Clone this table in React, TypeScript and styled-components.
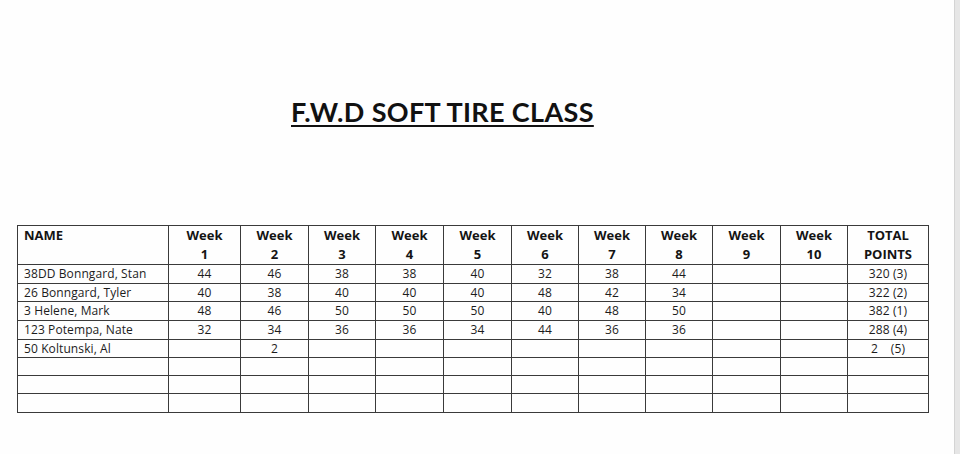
import React from "react";
import styled, { createGlobalStyle } from "styled-components";

const Global = createGlobalStyle`
  html, body { margin: 0; padding: 0; background: #ffffff; }
  body { font-family: "Open Sans", "Liberation Sans", sans-serif; color: #161616; }
`;

const Page = styled.div`
  position: relative;
  width: 960px;
  height: 454px;
  overflow: hidden;
  background: #fefefe;
  display: flex;
  flex-direction: column;
  padding: 95px 0 0 17px;
  box-sizing: border-box;
`;

const Edge = styled.div`
  position: absolute;
  top: 0;
  right: 0;
  width: 5px;
  height: 100%;
  background: #e6e6e6;
  border-left: 1px solid #d4d4d4;
`;

const Title = styled.h1`
  margin: 0 0 0 274px;
  font-family: "Lato", "Open Sans", sans-serif;
  font-weight: 700;
  font-size: 27px;
  letter-spacing: 0.35px;
  line-height: 33px;
  text-decoration: underline;
  text-decoration-thickness: 2px;
  text-underline-offset: 3px;
  color: #111;
  white-space: nowrap;
`;

const Table = styled.table`
  margin-top: 97px;
  border-collapse: collapse;
  table-layout: fixed;
  width: 912px;
  border: 1px solid #3a3a3a;
`;

const HeadCell = styled.th<{ $left?: boolean }>`
  border: 1px solid #3a3a3a;
  height: 37px;
  padding: 0 0 0 ${(p) => (p.$left ? "6px" : "0")};
  text-align: ${(p) => (p.$left ? "left" : "center")};
  vertical-align: top;
  font-size: 13px;
  font-weight: 700;
  line-height: 19px;
  color: #141414;
  box-sizing: border-box;
`;

const Cell = styled.td<{ $left?: boolean; $h: number }>`
  border: 1px solid #3a3a3a;
  height: ${(p) => p.$h}px;
  padding: 0 0 0 ${(p) => (p.$left ? "6px" : "0")};
  text-align: ${(p) => (p.$left ? "left" : "center")};
  vertical-align: middle;
  font-size: 12px;
  letter-spacing: 0.1px;
  line-height: 14px;
  color: #1c1c1c;
  white-space: pre;
  box-sizing: border-box;
`;

const widths = [151, 72, 68, 67, 68, 68, 67, 67, 67, 68, 67, 81];

const rows: { name: string; weeks: string[]; total: string }[] = [
  { name: "38DD Bonngard, Stan", weeks: ["44", "46", "38", "38", "40", "32", "38", "44", "", ""], total: "320 (3)" },
  { name: "26 Bonngard, Tyler", weeks: ["40", "38", "40", "40", "40", "48", "42", "34", "", ""], total: "322 (2)" },
  { name: "3 Helene, Mark", weeks: ["48", "46", "50", "50", "50", "40", "48", "50", "", ""], total: "382 (1)" },
  { name: "123 Potempa, Nate", weeks: ["32", "34", "36", "36", "34", "44", "36", "36", "", ""], total: "288 (4)" },
  { name: "50 Koltunski, Al", weeks: ["", "2", "", "", "", "", "", "", "", ""], total: "2    (5)" },
  { name: "", weeks: Array(10).fill(""), total: "" },
  { name: "", weeks: Array(10).fill(""), total: "" },
  { name: "", weeks: Array(10).fill(""), total: "" },
];

const heights = [19, 18, 19, 19, 18, 18, 18, 19];

export default function App() {
  return (
    <Page>
      <Global />
      <Title>F.W.D SOFT TIRE CLASS</Title>
      <Table>
        <colgroup>
          {widths.map((w, i) => (
            <col key={i} style={{ width: w }} />
          ))}
        </colgroup>
        <thead>
          <tr>
            <HeadCell $left>NAME</HeadCell>
            {Array.from({ length: 10 }, (_, i) => (
              <HeadCell key={i}>
                Week
                <br />
                {i + 1}
              </HeadCell>
            ))}
            <HeadCell>
              TOTAL
              <br />
              POINTS
            </HeadCell>
          </tr>
        </thead>
        <tbody>
          {rows.map((r, ri) => (
            <tr key={ri}>
              <Cell $left $h={heights[ri]}>{r.name}</Cell>
              {r.weeks.map((w, wi) => (
                <Cell key={wi} $h={heights[ri]}>{w}</Cell>
              ))}
              <Cell $h={heights[ri]}>{r.total}</Cell>
            </tr>
          ))}
        </tbody>
      </Table>
      <Edge />
    </Page>
  );
}
